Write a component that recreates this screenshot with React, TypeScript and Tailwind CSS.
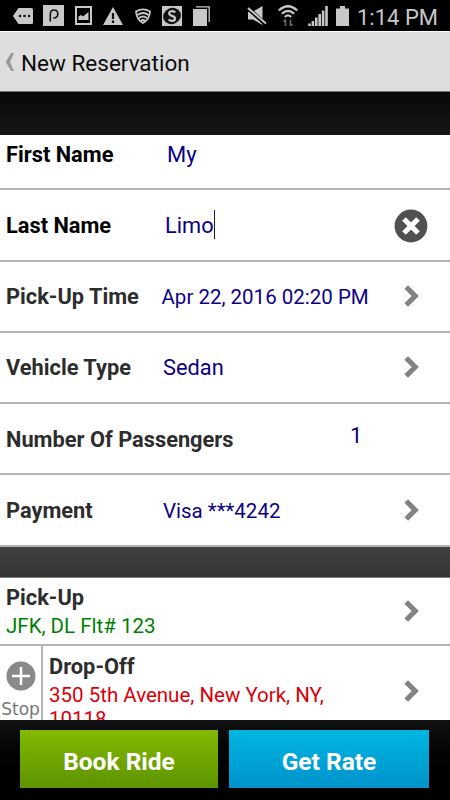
import type { ReactNode } from "react";

function Chevron() {
  return (
    <svg viewBox="0 0 16 22" className="h-[22px] w-4 shrink-0" fill="none" stroke="#838383" strokeWidth="5.2">
      <path d="M2.200 2 11.200 11 2.200 20" />
    </svg>
  );
}

function ClearIcon() {
  return (
    <svg viewBox="0 0 34 34" className="h-[34px] w-[34px] shrink-0">
      <circle cx="17" cy="17" r="16.4" fill="#505050" />
      <path d="M10 10 24 24M24 10 10 24" stroke="#fff" strokeWidth="5.2" />
    </svg>
  );
}

function StatusBar() {
  return (
    <header className="flex h-[31px] shrink-0 items-center bg-black text-[#c8c8c8]">
      <svg viewBox="0 0 20 16" className="ml-[13px] h-4 w-5 shrink-0" fill="currentColor">
        <path d="M5.5 0H18.5Q20 0 20 1.500V14.500Q20 16 18.500 16H5.500L0 8Z" />
        <g fill="#111">
          <circle cx="7" cy="8" r="1.300" />
          <circle cx="11.500" cy="8" r="1.300" />
          <circle cx="16" cy="8" r="1.300" />
        </g>
      </svg>
      <svg viewBox="0 0 21 21" className="ml-2.5 h-[21px] w-[21px] shrink-0">
        <rect width="21" height="21" fill="currentColor" />
        <path d="M7.300 16.500V9.500C7.300 6.500 8.800 5 11 5C13.300 5 14.800 6.600 14.800 9C14.800 11.600 13 13 10.300 13" fill="none" stroke="#111" strokeWidth="1.600" />
      </svg>
      <svg viewBox="0 0 17 19" className="ml-[11px] h-[19px] w-[17px] shrink-0">
        <rect x="1" y="1" width="15" height="17" fill="none" stroke="currentColor" strokeWidth="2" />
        <path d="M3.500 14V10.500L6 9L8 10.500L13.500 6V14Z" fill="currentColor" />
      </svg>
      <svg viewBox="0 0 20 18" className="ml-[11px] h-[18px] w-5 shrink-0">
        <path d="M10 0 20 18H0Z" fill="currentColor" />
        <path d="M10 6V12M10 13.500V16" stroke="#111" strokeWidth="2.200" />
      </svg>
      <svg viewBox="0 0 16 16" className="ml-3 h-4 w-4 shrink-0" fill="none" stroke="currentColor" strokeWidth="1.800">
        <path d="M1 3.500Q8-.8 15 3.500Q14.500 11.500 8 15Q1.500 11.500 1 3.500Z" />
        <path d="M2.500 7Q8 3 13.500 7M4 10Q8 7 12 10M6 12.800Q8 11.200 10 12.800" />
      </svg>
      <svg viewBox="0 0 20 20" className="ml-[11px] h-5 w-5 shrink-0">
        <rect width="20" height="20" fill="currentColor" />
        <ellipse cx="10" cy="10" rx="9" ry="8" fill="#111" transform="rotate(-25 10 10)" />
        <path d="M13.200 6.500C11.500 4.500 7.200 4.800 7.200 7.400C7.200 10.500 13 9.200 13 12.500C13 15.500 8.300 15.500 6.600 13.400" fill="none" stroke="currentColor" strokeWidth="2.200" />
      </svg>
      <svg viewBox="0 0 17 20" className="ml-[11px] h-5 w-[17px] shrink-0">
        <rect y="3" width="14" height="17" fill="currentColor" />
        <path d="M3 .8H16.200V16" fill="none" stroke="currentColor" strokeWidth="1.300" />
      </svg>

      <svg viewBox="0 0 20 19" className="ml-[37px] h-[19px] w-5 shrink-0">
        <path d="M1 5.500H6L15.500 0V19L6 13.500H1Z" fill="currentColor" />
        <path d="M0 1.500 19 18.500" stroke="#000" strokeWidth="4" />
        <path d="M1 2 19 17.500" stroke="currentColor" strokeWidth="2" />
      </svg>
      <svg viewBox="0 0 20 22" className="ml-[11px] h-[22px] w-5 shrink-0" fill="none" stroke="currentColor" strokeWidth="2.200">
        <path d="M.8 5.500Q10-3 19.200 5.500M3.800 8.800Q10 2.800 16.200 8.800M6.800 12Q10 8.800 13.200 12" />
        <path d="M7.500 21V14.500M5.500 16.500 7.500 14.500M12.500 14.500V21M14.500 19 12.500 21" stroke="#666" strokeWidth="1.600" />
      </svg>
      <svg viewBox="0 0 20 20" className="ml-2.5 h-5 w-5 shrink-0" stroke="currentColor" strokeWidth="2.600">
        <path d="M1.500 20V17.500M4.900 20V15M8.300 20V11.500M11.700 20V8M15.100 20V4.500M18.500 20V0" />
      </svg>
      <svg viewBox="0 0 13 20" className="ml-2 h-5 w-[13px] shrink-0" fill="currentColor">
        <path d="M4 0H9V2.500H13V20H0V2.500H4Z" />
      </svg>
      <span className="ml-2 pt-1 text-[22px] leading-[28px] whitespace-nowrap">1:14 PM</span>
    </header>
  );
}

type FieldRowProps = {
  label: string;
  labelClass: string;
  value: string;
  valueClass: string;
  cursor?: boolean;
  action?: ReactNode;
};

function FieldRow({ label, labelClass, value, valueClass, cursor, action }: FieldRowProps) {
  return (
    <div className="flex h-[71.25px] shrink-0 items-center border-b-2 border-[#b5b5b5] pr-[30px] pl-1.5">
      <span className={`shrink-0 pt-0.5 text-[21.800px] leading-[26px] font-bold whitespace-nowrap ${labelClass}`}>{label}</span>
      <span className={`flex flex-1 items-center whitespace-nowrap text-[#0d0085] ${valueClass}`}>
        {value}
        {cursor && <span className="-mt-0.5 h-[29px] w-[1.500px] bg-[#222]" />}
      </span>
      {action}
    </div>
  );
}

export default function App() {
  return (
    <div className="flex h-[800px] w-[450px] flex-col overflow-hidden bg-black font-['Roboto',sans-serif]">
      <StatusBar />
      <nav className="flex h-[61px] shrink-0 items-center border-t border-b border-t-white border-b-[#777] bg-[#dedede] pl-[5px]">
        <svg viewBox="0 0 10 20" className="h-5 w-2.5" fill="#999">
          <path d="M6 1H9L5 10 9 19H6L.8 10Z" />
        </svg>
        <h1 className="ml-1.5 pt-0.5 text-[22.500px] leading-[28px] text-[#0c0c0c]">New Reservation</h1>
      </nav>
      <div className="h-[43px] shrink-0 bg-linear-to-b from-[#090909] to-[#151515]" />

      <main className="flex h-[585px] shrink-0 flex-col overflow-hidden bg-white">
        <div className="-mt-4 flex shrink-0 flex-col">
          <FieldRow label="First Name" labelClass="w-[161px] text-black" value="My" valueClass="pt-0.5 text-[22px]" />
          <FieldRow label="Last Name" labelClass="w-[159px] text-black" value="Limo" valueClass="pt-0.5 text-[21.800px]" cursor action={<div className="-mr-2 pt-0.5"><ClearIcon /></div>} />
          <FieldRow label="Pick-Up Time" labelClass="w-[155.500px] text-[#2d2d2d]" value="Apr 22, 2016 02:20 PM" valueClass="pt-0.5 text-[20.500px]" action={<Chevron />} />
          <FieldRow label="Vehicle Type" labelClass="w-[157px] text-[#2d2d2d]" value="Sedan" valueClass="pt-0.5 text-[21.800px]" action={<Chevron />} />
          <FieldRow label="Number Of Passengers" labelClass="w-[344px] text-[#2d2d2d]" value="1" valueClass="pb-[7px] text-[22px]" />
          <FieldRow label="Payment" labelClass="w-[157px] text-[#2d2d2d]" value="Visa ***4242" valueClass="pt-0.5 text-[20.500px]" action={<Chevron />} />
        </div>
        <div className="h-[31px] shrink-0 border-b border-[#777] bg-linear-to-b from-[#404040] to-[#353535]" />
        <div className="flex h-[68px] shrink-0 items-center justify-between border-b-2 border-[#b5b5b5] pr-[30px] pl-1.5">
          <div className="pt-[3px]">
            <p className="text-[21.800px] leading-7 font-bold text-[#2d2d2d]">Pick-Up</p>
            <p className="text-[20.500px] leading-7 text-[#008000]">JFK, DL Flt# 123</p>
          </div>
          <Chevron />
        </div>
        <div className="flex h-[91px] shrink-0 pr-[30px]">
          <div className="flex w-[43px] shrink-0 flex-col items-center border-r-2 border-[#b5b5b5] pt-[15px]">
            <svg viewBox="0 0 30 30" className="h-[30px] w-[30px]">
              <circle cx="15" cy="15" r="14.500" fill="#898989" />
              <path d="M15 6V24M6 15H24" stroke="#fff" strokeWidth="2.500" />
            </svg>
            <span className="mt-1.5 font-['DejaVu_Sans',sans-serif] text-[17px] leading-6 text-[#777]">Stop</span>
          </div>
          <div className="flex-1 pt-[7px] pl-1.5">
            <p className="text-[21.800px] leading-7 font-bold text-[#2d2d2d]">Drop-Off</p>
            <p className="w-[300px] pt-0.5 text-[20.500px] leading-[24px] text-[#d9000b]">350 5th Avenue, New York, NY, 10118</p>
          </div>
          <div className="flex items-center">
            <Chevron />
          </div>
        </div>
      </main>

      <footer className="flex h-20 shrink-0 gap-[11px] bg-linear-to-b from-[#111] to-black px-5 pt-2.5 pb-3">
        <button className="h-[58px] w-[198px] bg-linear-to-b from-[#84b900] to-[#5e9300] pt-1.5 text-[24.500px] font-bold text-white">
          Book Ride
        </button>
        <button className="h-[58px] w-[200px] bg-linear-to-b from-[#00b7e2] to-[#0092cb] pt-1.5 text-[24.500px] font-bold text-white">
          Get Rate
        </button>
      </footer>
    </div>
  );
}
